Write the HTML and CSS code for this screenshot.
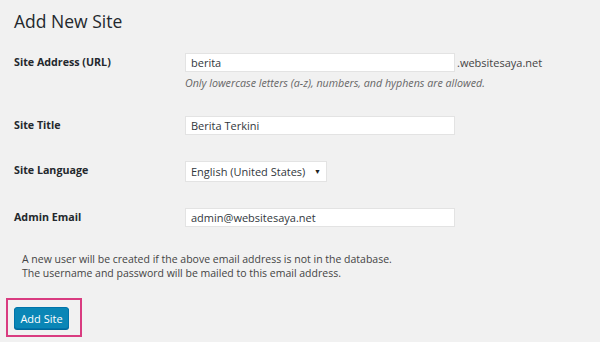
FILE: index.html
```html
<!DOCTYPE html>
<html lang="en">
<head>
<meta charset="utf-8">
<title>Add New Site</title>
<link rel="stylesheet" href="styles.css">
</head>
<body>

<div class="wrap">
	<h1 class="title">Add New Site</h1>

	<form class="site-form">
		<!-- 站点地址 -->
		<div class="row">
			<label class="label">Site Address (URL)</label>
			<div class="field">
				<div class="addr">
					<div class="input">berita</div>
					<span class="domain">.websitesaya.net</span>
				</div>
				<p class="help">Only lowercase letters (a-z), numbers, and hyphens are allowed.</p>
			</div>
		</div>

		<div class="row">
			<label class="label">Site Title</label>
			<div class="field">
				<div class="input">Berita Terkini</div>
			</div>
		</div>

		<div class="row">
			<label class="label">Site Language</label>
			<div class="field">
				<div class="select">
					<span>English (United States)</span>
					<span class="arrow">&#9660;</span>
				</div>
			</div>
		</div>

		<div class="row">
			<label class="label">Admin Email</label>
			<div class="field">
				<div class="input">admin@websitesaya.net</div>
			</div>
		</div>

		<p class="note">A new user will be created if the above email address is not in the database.<br>The username and password will be mailed to this email address.</p>

		<!-- 高亮框 -->
		<div class="highlight">
			<button type="button" class="btn">Add Site</button>
		</div>
	</form>
</div>

</body>
</html>
```

FILE: styles.css
```css
	html,body{margin:0;padding:0;background:#f1f1f1;font-family:"Open Sans","Noto Sans",sans-serif;color:#444;font-size:11px;}

	.wrap {
		padding: 9px 0 0 14px;
	}
	.title {
		margin: 0;
		font-size: 17.5px;
		font-weight: 400;
		line-height: 24px;
		color: #23282d;
	}

	.site-form {
		margin-top: 20px;
	}
	.row {
		display: grid;
		grid-template-columns: 171px 270px;
		align-items: start;
		margin-bottom: 26px;
	}
	.label {
		font-weight: 700;
		font-size: 10.7px;
		line-height: 19px;
		color: #23282d;
	}

	.addr {
		display: flex;
		align-items: center;
		width: 360px;
	}
	.addr .input {
		flex: 0 0 270px;
	}
	.domain {
		padding-left: 2px;
		color: #444;
	}

	.input {
		box-sizing: border-box;
		height: 19px;
		padding: 0 5px;
		line-height: 17px;
		background-color: #fff;
		border: 1px solid #e3e3e3;
		color: #32373c;
	}
	.help {
		margin: 4px 0 0;
		font-style: italic;
		font-size: 10.7px;
		line-height: 14px;
		color: #666;
		white-space: nowrap;
	}

	.select {
		box-sizing: border-box;
		display: flex;
		justify-content: space-between;
		align-items: center;
		width: 142px;
		height: 21px;
		padding: 0 5px;
		background-color: #fff;
		border: 1px solid #e3e3e3;
		color: #32373c;
	}
	.select .arrow {
		font-size: 7px;
		color: #222;
	}

	.note {
		margin: -1px 0 0 8px;
		font-size: 10.5px;
		line-height: 14px;
		color: #444;
	}

	.highlight {
		display: inline-block;
		margin: 18px 0 0 -8px;
		padding: 7px 11px 6px 6px;
		border: 2px solid #d93c80;
	}
	.btn {
		display: block;
		box-sizing: border-box;
		width: 55px;
		height: 22px;
		padding: 0;
		font-family: inherit;
		font-size: 11px;
		color: #fff;
		background-color: #0a86b6;
		border: 1px solid #0073aa;
		border-radius: 3px;
		box-shadow: 0 1px 0 #006799;
	}
```
